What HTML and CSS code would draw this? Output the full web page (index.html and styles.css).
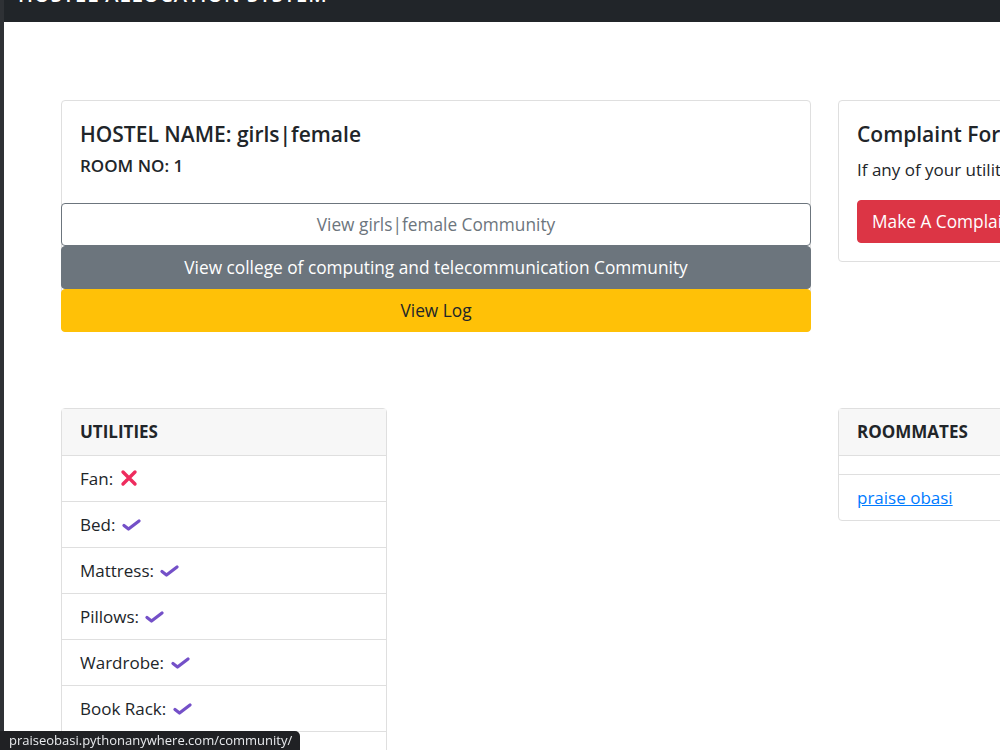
FILE: index.html
```html
<!DOCTYPE html>
<html lang="en">
<head>
    <meta charset="UTF-8">
    <title>Hostel Allocation System</title>
    <link rel="stylesheet" href="styles.css">
</head>
<body>
    <nav class="navbar">
        <span class="brand">HOSTEL ALLOCATION SYSTEM</span>
    </nav>

    <main class="page">
        <div class="row">
            <div class="card">
                <div class="card-body">
                    <h4 class="card-title">HOSTEL NAME: girls|female</h4>
                    <h6 class="card-sub">ROOM NO: 1</h6>
                </div>
                <a href="#" class="btn btn-outline">View girls|female Community</a>
                <a href="#" class="btn btn-secondary">View college of computing and telecommunication Community</a>
                <a href="#" class="btn btn-warning btn-last">View Log</a>
            </div>

            <div class="card card-top">
                <div class="card-body">
                    <h4 class="card-title">Complaint Form</h4>
                    <p class="card-text">If any of your utilities is faulty, let us know</p>
                    <a href="#" class="btn btn-danger">Make A Complaint</a>
                </div>
            </div>
        </div>

        <div class="row row-second">
            <div class="card card-utilities">
                <div class="card-header">UTILITIES</div>
                <ul class="list-group">
                    <li class="list-item">Fan: <svg class="icon" width="18" height="18" viewBox="0 0 18 18"><path d="M3 3 L15 15 M15 3 L3 15" stroke="#ee2c5e" stroke-width="3.4" stroke-linecap="round"/></svg></li>
                    <li class="list-item">Bed: <svg class="icon tick" width="19" height="12" viewBox="0 0 19 12"><path d="M2 6.5 L6.5 10 L17 2" fill="none" stroke="#7450c8" stroke-width="3.2" stroke-linecap="round" stroke-linejoin="round"/></svg></li>
                    <li class="list-item">Mattress: <svg class="icon tick" width="19" height="12" viewBox="0 0 19 12"><path d="M2 6.5 L6.5 10 L17 2" fill="none" stroke="#7450c8" stroke-width="3.2" stroke-linecap="round" stroke-linejoin="round"/></svg></li>
                    <li class="list-item">Pillows: <svg class="icon tick" width="19" height="12" viewBox="0 0 19 12"><path d="M2 6.5 L6.5 10 L17 2" fill="none" stroke="#7450c8" stroke-width="3.2" stroke-linecap="round" stroke-linejoin="round"/></svg></li>
                    <li class="list-item">Wardrobe: <svg class="icon tick" width="19" height="12" viewBox="0 0 19 12"><path d="M2 6.5 L6.5 10 L17 2" fill="none" stroke="#7450c8" stroke-width="3.2" stroke-linecap="round" stroke-linejoin="round"/></svg></li>
                    <li class="list-item">Book Rack: <svg class="icon tick" width="19" height="12" viewBox="0 0 19 12"><path d="M2 6.5 L6.5 10 L17 2" fill="none" stroke="#7450c8" stroke-width="3.2" stroke-linecap="round" stroke-linejoin="round"/></svg></li>
                    <li class="list-item">Reading Table: <svg class="icon tick" width="19" height="12" viewBox="0 0 19 12"><path d="M2 6.5 L6.5 10 L17 2" fill="none" stroke="#7450c8" stroke-width="3.2" stroke-linecap="round" stroke-linejoin="round"/></svg></li>
                </ul>
            </div>

            <div class="card card-roommates">
                <div class="card-header">ROOMMATES</div>
                <ul class="list-group">
                    <li class="list-item list-empty"></li>
                    <li class="list-item"><a href="#" class="link">praise obasi</a></li>
                </ul>
            </div>
        </div>
    </main>

    <div class="status-bar">praiseobasi.pythonanywhere.com/community/</div>
</body>
</html>
```

FILE: styles.css
```css
html, body {
    height: 100%;
}
body {
    margin: 0;
    overflow: hidden;
    font-family: "Open Sans", "Noto Sans", Arial, sans-serif;
    font-size: 17px;
    color: #212529;
    background: #fff;
    border-left: 4px solid #2e3135;
}
.navbar {
    background: #212529;
    height: 22px;
    overflow: hidden;
    padding-left: 14px;
}
.brand {
    display: block;
    margin-top: -15px;
    color: #fff;
    font-size: 20px;
    font-weight: 600;
    line-height: 20px;
    letter-spacing: 1px;
}
.page {
    padding: 78px 0 0 57px;
}
.row {
    display: grid;
    grid-template-columns: 750px 375px;
    gap: 27px;
    align-items: start;
}
.row-second {
    margin-top: 76px;
}
.card {
    border: 1px solid #dfdfdf;
    border-radius: 4px;
    background: #fff;
    display: flex;
    flex-direction: column;
}
.card-body {
    padding: 19px 18px 25px;
}
.card-title {
    margin: 0;
    font-size: 21px;
    font-weight: 600;
    line-height: 28px;
}
.card-sub {
    margin: 6px 0 0;
    font-size: 17px;
    font-weight: 600;
    line-height: 24px;
}
.card-text {
    margin: 9px 0 0;
    line-height: 26px;
}
.btn {
    display: block;
    text-align: center;
    text-decoration: none;
    font-size: 17.3px;
    line-height: 27px;
    padding: 7px 16px;
    border: 1px solid transparent;
    border-radius: 4px;
    margin: 0 -1px;
}
.btn-outline {
    color: #6c757d;
    border-color: #6c757d;
    background: #fff;
}
.btn-secondary {
    color: #fff;
    background: #6c757d;
    border-color: #6c757d;
}
.btn-warning {
    color: #212529;
    background: #ffc107;
    border-color: #ffc107;
}
.btn-last {
    margin-bottom: -1px;
}
.btn-danger {
    display: inline-block;
    margin: 17px 0 0;
    color: #fff;
    background: #dc3545;
    border-color: #dc3545;
    padding: 7px 14px;
    white-space: nowrap;
}
.card-top .card-body {
    padding-bottom: 18px;
}
.card-utilities {
    width: 324px;
}
.card-header {
    background: #f7f7f7;
    border-bottom: 1px solid #dfdfdf;
    padding: 10px 18px;
    font-weight: 700;
    line-height: 26px;
}
.list-group {
    list-style: none;
    margin: 0;
    padding: 0;
}
.list-item {
    padding: 9px 18px;
    line-height: 27px;
    border-top: 1px solid #dfdfdf;
}
.list-item:first-child {
    border-top: none;
}
.list-empty {
    padding: 9px 18px;
    line-height: 0;
}
.icon {
    vertical-align: -2px;
    margin-left: 2px;
}
.tick {
    vertical-align: 0;
}
.link {
    color: #007bff;
    text-decoration: underline;
}
.status-bar {
    position: fixed;
    left: 0;
    bottom: 0;
    background: #202124;
    color: #e8eaed;
    font-size: 13px;
    line-height: 19px;
    padding: 0 8px 0 9px;
    border-top-right-radius: 5px;
    white-space: nowrap;
}
```
